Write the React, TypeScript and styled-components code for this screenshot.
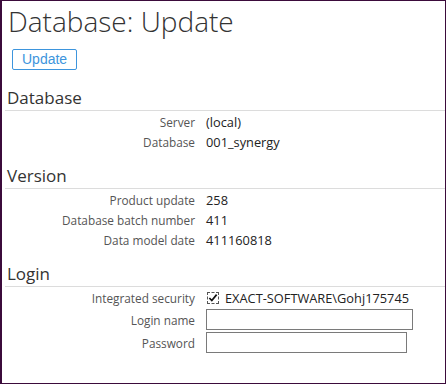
import React from "react";
import styled, { createGlobalStyle } from "styled-components";

const GlobalStyle = createGlobalStyle`
  html, body {
    margin: 0;
    padding: 0;
    background: #ffffff;
  }
  * {
    box-sizing: border-box;
  }
`;

const Frame = styled.div`
  width: 446px;
  height: 384px;
  border: 1px solid #3b0b3b;
  border-left-width: 2px;
  background: #ffffff;
  font-family: "Open Sans", "DejaVu Sans", sans-serif;
  color: #222;
  overflow: hidden;
`;

const Title = styled.h1`
  margin: 0;
  padding: 2px 0 0 6px;
  font-size: 28px;
  font-weight: 300;
  line-height: 36px;
  color: #333;
`;

const Toolbar = styled.div`
  display: flex;
  padding: 10px 0 4px 10px;
`;

const ActionButton = styled.button`
  height: 21px;
  padding: 0 9px;
  border: 1px solid #3d95dd;
  border-radius: 2px;
  background: #fff;
  color: #3d95dd;
  font-family: "Liberation Sans", Arial, sans-serif;
  font-size: 14px;
  line-height: 19px;
`;

const Section = styled.section`
  margin-top: 13px;
`;

const SectionTitle = styled.h2`
  margin: 0 0 0 3px;
  padding-left: 2px;
  font-size: 17px;
  font-weight: 400;
  line-height: 22px;
  color: #333;
  border-bottom: 1px solid #dcdcdc;
  padding-bottom: 1px;
`;

const Rows = styled.div`
  display: flex;
  flex-direction: column;
  padding-top: 1px;
`;

const Row = styled.div<{ $h?: number }>`
  display: grid;
  grid-template-columns: 193px 1fr;
  column-gap: 11px;
  align-items: center;
  height: ${(p) => p.$h ?? 20}px;
`;

const Label = styled.span`
  text-align: right;
  font-size: 11.8px;
  color: #555;
`;

const Value = styled.span`
  display: flex;
  align-items: center;
  gap: 6px;
  font-size: 12.8px;
  color: #222;
`;

const TextInput = styled.input<{ $w: number }>`
  width: ${(p) => p.$w}px;
  height: 21px;
  border: 1px solid #7a7a7a;
  border-radius: 0;
  padding: 0 3px;
  font-family: inherit;
  font-size: 12px;
`;

const CheckWrap = styled.span`
  display: inline-flex;
  align-items: center;
  justify-content: center;
  width: 12px;
  height: 12px;
  margin-left: 1px;
  border: 1px dashed #555;
`;

const CheckMark = () => (
  <svg width="10" height="10" viewBox="0 0 11 11">
    <path d="M1.5 5.5 L4.2 8.3 L9.5 1.8" fill="none" stroke="#111" strokeWidth="1.9" />
  </svg>
);

export default function App() {
  return (
    <>
      <GlobalStyle />
      <Frame>
        <Title>Database: Update</Title>
        <Toolbar>
          <ActionButton>Update</ActionButton>
        </Toolbar>

        <Section>
          <SectionTitle>Database</SectionTitle>
          <Rows>
            <Row>
              <Label>Server</Label>
              <Value>(local)</Value>
            </Row>
            <Row>
              <Label>Database</Label>
              <Value>001_synergy</Value>
            </Row>
          </Rows>
        </Section>

        <Section>
          <SectionTitle>Version</SectionTitle>
          <Rows>
            <Row>
              <Label>Product update</Label>
              <Value>258</Value>
            </Row>
            <Row>
              <Label>Database batch number</Label>
              <Value>411</Value>
            </Row>
            <Row>
              <Label>Data model date</Label>
              <Value>411160818</Value>
            </Row>
          </Rows>
        </Section>

        <Section>
          <SectionTitle>Login</SectionTitle>
          <Rows>
            <Row>
              <Label>Integrated security</Label>
              <Value>
                <CheckWrap>
                  <CheckMark />
                </CheckWrap>
                EXACT-SOFTWARE\Gohj175745
              </Value>
            </Row>
            <Row $h={23}>
              <Label>Login name</Label>
              <Value>
                <TextInput $w={207} />
              </Value>
            </Row>
            <Row $h={23}>
              <Label>Password</Label>
              <Value>
                <TextInput $w={201} type="password" />
              </Value>
            </Row>
          </Rows>
        </Section>
      </Frame>
    </>
  );
}
